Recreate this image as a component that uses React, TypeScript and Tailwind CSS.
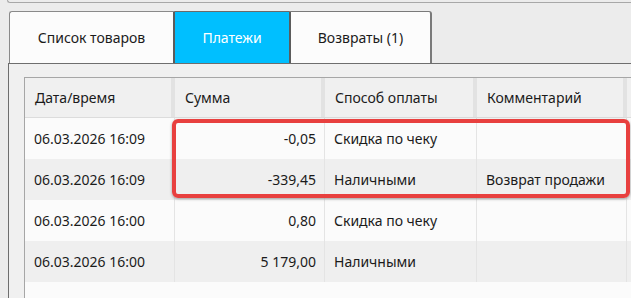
const rows = [
  { date: "06.03.2026 16:09", sum: "-0,05", method: "Скидка по чеку", comment: "" },
  { date: "06.03.2026 16:09", sum: "-339,45", method: "Наличными", comment: "Возврат продажи" },
  { date: "06.03.2026 16:00", sum: "0,80", method: "Скидка по чеку", comment: "" },
  { date: "06.03.2026 16:00", sum: "5 179,00", method: "Наличными", comment: "" },
];

const headers = ["Дата/время", "Сумма", "Способ оплаты", "Комментарий"];

function HeaderCell({ label, width }: { label: string; width: string }) {
  return (
    <div className={`${width} flex h-full shrink-0`}>
      <div className="flex flex-1 items-center pl-[10px]">{label}</div>
      <div className="w-[4px] bg-[#e2e2e2]" />
    </div>
  );
}

export default function App() {
  return (
    <div
      className="w-[631px] h-[298px] overflow-hidden bg-[#ececec] text-[14px] text-[#1b1b1b]"
      style={{ fontFamily: '"Noto Sans", "Open Sans", sans-serif' }}
    >
      <div className="ml-[7px] h-[3px] rounded-bl-[3px] border-b border-l border-[#a8a8a8]" />

      <div className="ml-[9px] mt-[8px] flex h-[52px]">
        <div className="flex w-[166px] items-center justify-center rounded-tl-[3px] border-l border-t border-[#8a8a8a] border-r-2 border-r-[#5c5c5c] bg-[#fcfcfc]">
          Список товаров
        </div>
        <div className="flex w-[114px] items-center justify-center border-t border-[#6a6a6a] bg-[#00bfff] text-white">
          Платежи
        </div>
        <div className="flex w-[143px] items-center justify-center rounded-tr-[3px] border-l-2 border-l-[#5c5c5c] border-r-2 border-t border-[#7a7a7a] bg-[#fcfcfc]">
          Возвраты (1)
        </div>
      </div>

      <div className="relative ml-[8px] h-[235px] border-l border-t border-[#6e6e6e] bg-[#f0f0f0] pl-[15px] pt-[13px]">
        <div className="h-full border-l border-t border-[#a6a6a6] bg-[#fbfbfb]">
          <div className="flex h-[40px] border-b border-[#dcdcdc] bg-[#f0f0f0]">
            <HeaderCell label={headers[0]} width="w-[150px]" />
            <HeaderCell label={headers[1]} width="w-[150px]" />
            <HeaderCell label={headers[2]} width="w-[152px]" />
            <HeaderCell label={headers[3]} width="w-[150px]" />
            <div className="flex-1" />
          </div>

          {rows.map((r, i) => (
            <div
              key={i}
              className={`flex h-[41px] items-center ${i % 2 === 1 ? "bg-[#efefef]" : "bg-[#fbfbfb]"}`}
            >
              <div className="flex h-full w-[150px] shrink-0 items-center border-r border-[#e4e4e4] pl-[9px]">
                {r.date}
              </div>
              <div className="flex h-full w-[150px] shrink-0 items-center justify-end border-r border-[#e4e4e4] pr-[8px]">
                {r.sum}
              </div>
              <div className="flex h-full w-[152px] shrink-0 items-center border-r border-[#e4e4e4] pl-[9px]">
                {r.method}
              </div>
              <div className="flex h-full w-[150px] shrink-0 items-center border-r border-[#e4e4e4] pl-[9px]">
                {r.comment}
              </div>
              <div className="flex-1" />
            </div>
          ))}
        </div>

        <div className="absolute left-[163px] top-[55px] h-[79px] w-[458px] rounded-[6px] border-4 border-[#e8403f] shadow-[0_1px_3px_rgba(0,0,0,0.35)]" />
      </div>
    </div>
  );
}
